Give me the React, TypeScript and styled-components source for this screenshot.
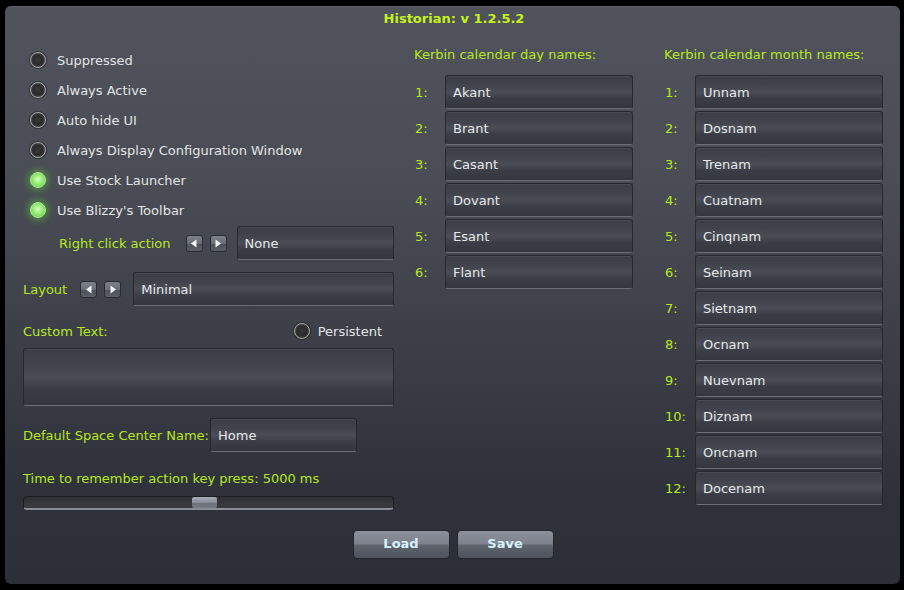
import React from "react";
import styled, { createGlobalStyle, css } from "styled-components";

const Global = createGlobalStyle`
  html, body { margin: 0; padding: 0; background: #000; }
  body { font-family: "DejaVu Sans", "Liberation Sans", sans-serif; font-size: 13px; }
`;

const Screen = styled.div`
  width: 904px;
  height: 590px;
  padding: 6px 4px 0 5px;
  box-sizing: border-box;
  background: #000;
`;

const Window = styled.div`
  width: 895px;
  height: 578px;
  box-sizing: border-box;
  border-radius: 6px;
  background: linear-gradient(180deg, #50535b 0%, #4a4d55 30%, #3b3e46 60%, #2e3139 85%, #2c2f37 100%);
  box-shadow: inset 0 1px 0 rgba(255,255,255,0.08);
  padding: 5px 17px 0 18px;
  display: flex;
  flex-direction: column;
`;

const Title = styled.div`
  text-align: center;
  color: #c4f21c;
  font-weight: bold;
  font-size: 13px;
  line-height: 16px;
  height: 16px;
  padding-left: 2px;
`;

const Columns = styled.div`
  display: grid;
  grid-template-columns: 371px 219px 230px;
  column-gap: 20px;
  margin-top: 23px;
`;

const Left = styled.div`
  display: flex;
  flex-direction: column;
  padding-top: 3px;
  margin-top: -8px;
`;

const ToggleRow = styled.div`
  display: flex;
  align-items: center;
  height: 30px;
  padding-left: 7px;
  color: #e2e4e6;
`;

const Dot = styled.span<{ $on?: boolean }>`
  width: 16px;
  height: 16px;
  border-radius: 50%;
  flex: none;
  margin-right: 11px;
  box-sizing: border-box;
  ${(p) =>
    p.$on
      ? css`
          background: radial-gradient(circle at 50% 45%, #d8ffc8 0%, #9cf07a 40%, #5cc43a 100%);
          border: 1px solid #b8f0a0;
          box-shadow: 0 0 6px 3px rgba(90, 200, 60, 0.45);
        `
      : css`
          background: radial-gradient(circle at 50% 50%, #3a3a3a 0%, #2a2a2a 45%, #5a5a5a 100%);
          border: 1.5px solid #a8a8a8;
          box-shadow: 0 0 1px 1px rgba(0,0,0,0.4);
        `}
`;

const Label = styled.span<{ $ml?: number }>`
  color: #b5e81c;
  white-space: nowrap;
  margin-left: ${(p) => p.$ml ?? 0}px;
`;

const Plain = styled.span`
  color: #e2e4e6;
  margin-right: 12px;
  margin-left: -3px;
`;

const Row = styled.div<{ $h?: number; $mt?: number }>`
  display: flex;
  align-items: center;
  flex: none;
  height: ${(p) => p.$h ?? 34}px;
  margin-top: ${(p) => p.$mt ?? 0}px;
`;

const Field = styled.div<{ $w?: number; $ml?: number }>`
  box-sizing: border-box;
  width: ${(p) => (p.$w ? `${p.$w}px` : "auto")};
  flex: ${(p) => (p.$w ? "none" : "1")};
  height: 34px;
  margin-left: ${(p) => p.$ml ?? 0}px;
  border-radius: 3px;
  border: 1px solid #26282d;
  border-bottom-color: #6a6e76;
  background: linear-gradient(180deg, #3a3d45 0%, #41444c 30%, #4a4d55 50%, #3b3e46 70%, #33363d 100%);
  box-shadow: inset 0 1px 0 rgba(255,255,255,0.07);
  color: #e6e8ea;
  display: flex;
  align-items: center;
  padding-left: 7px;
  white-space: nowrap;
`;

const TextArea = styled(Field)`
  flex: none;
  height: 58px;
  margin-top: 6px;
`;

const Arrows = styled.div<{ $ml: number; $mr: number }>`
  display: flex;
  gap: 7px;
  margin-left: ${(p) => p.$ml}px;
  margin-right: ${(p) => p.$mr}px;
`;

const ArrowBtn = styled.div`
  width: 17px;
  height: 17px;
  border-radius: 3px;
  box-sizing: border-box;
  border: 1px solid #2a2c31;
  background: linear-gradient(180deg, #7c808a 0%, #6a6e78 50%, #4c5059 52%, #5a5e67 100%);
  display: flex;
  align-items: center;
  justify-content: center;
`;

const Slider = styled.div`
  position: relative;
  flex: none;
  height: 14px;
  margin-top: 8px;
  box-sizing: border-box;
  border-radius: 4px;
  border: 1px solid #1c1e22;
  border-bottom: 2px solid #8a8e96;
  background: linear-gradient(180deg, #2e3036 0%, #3a3c42 100%);
`;

const Thumb = styled.div`
  position: absolute;
  left: 168px;
  top: 0;
  width: 25px;
  height: 11px;
  border-radius: 2px;
  background: linear-gradient(180deg, #a8acb6 0%, #8a8e98 50%, #6a6e78 52%, #767a84 100%);
`;

const NameColumn = styled.div<{ $pl?: number }>`
  padding-left: ${(p) => p.$pl ?? 0}px;
`;

const Header = styled.div`
  color: #b5e81c;
  height: 20px;
  line-height: 20px;
  margin-top: -5px;
  margin-bottom: 10px;
  white-space: nowrap;
`;

const NameList = styled.div`
  display: flex;
  flex-direction: column;
  gap: 2px;
`;

const NameRow = styled.div`
  display: flex;
  align-items: center;
  height: 34px;
`;

const Num = styled.span`
  width: 30px;
  padding-left: 1px;
  flex: none;
  color: #b5e81c;
`;

const Buttons = styled.div`
  display: flex;
  justify-content: center;
  gap: 7px;
  margin-top: 20px;
`;

const Button = styled.div`
  width: 97px;
  height: 29px;
  box-sizing: border-box;
  border-radius: 4px;
  border: 1px solid #25272c;
  background: linear-gradient(180deg, #8c909a 0%, #7e828c 48%, #60646e 52%, #4e525b 100%);
  color: #d6f2ff;
  font-weight: bold;
  font-size: 13px;
  display: flex;
  align-items: center;
  justify-content: center;
  padding-bottom: 3px;
`;

const Spacer = styled.div`
  flex: 1;
`;

const Tri = ({ dir }: { dir: "l" | "r" }) => (
  <svg width="8" height="9" viewBox="0 0 8 9">
    {dir === "l" ? (
      <polygon points="6.5,0.5 6.5,8.5 1,4.5" fill="#f4f4f4" />
    ) : (
      <polygon points="1.5,0.5 1.5,8.5 7,4.5" fill="#f4f4f4" />
    )}
  </svg>
);

const ArrowPair = ({ ml, mr }: { ml: number; mr: number }) => (
  <Arrows $ml={ml} $mr={mr}>
    <ArrowBtn>
      <Tri dir="l" />
    </ArrowBtn>
    <ArrowBtn>
      <Tri dir="r" />
    </ArrowBtn>
  </Arrows>
);

const toggles: [string, boolean][] = [
  ["Suppressed", false],
  ["Always Active", false],
  ["Auto hide UI", false],
  ["Always Display Configuration Window", false],
  ["Use Stock Launcher", true],
  ["Use Blizzy's Toolbar", true],
];

const days = ["Akant", "Brant", "Casant", "Dovant", "Esant", "Flant"];
const months = [
  "Unnam", "Dosnam", "Trenam", "Cuatnam", "Cinqnam", "Seinam",
  "Sietnam", "Ocnam", "Nuevnam", "Diznam", "Oncnam", "Docenam",
];

export default function App() {
  return (
    <>
      <Global />
      <Screen>
        <Window>
          <Title>Historian: v 1.2.5.2</Title>
          <Columns>
            <Left>
              {toggles.map(([t, on]) => (
                <ToggleRow key={t}>
                  <Dot $on={on} />
                  {t}
                </ToggleRow>
              ))}
              <Row $mt={1}>
                <Label $ml={36}>Right click action</Label>
                <ArrowPair ml={15} mr={10} />
                <Field>None</Field>
              </Row>
              <Row $mt={12}>
                <Label>Layout</Label>
                <ArrowPair ml={13} mr={12} />
                <Field>Minimal</Field>
              </Row>
              <Row $h={22} $mt={14}>
                <Label>Custom Text:</Label>
                <Spacer />
                <Dot />
                <Plain>Persistent</Plain>
              </Row>
              <TextArea />
              <Row $mt={12}>
                <Label>Default Space Center Name:</Label>
                <Field $w={147} $ml={1}>Home</Field>
              </Row>
              <Row $h={20} $mt={16}>
                <Label>Time to remember action key press: 5000 ms</Label>
              </Row>
              <Slider>
                <Thumb />
              </Slider>
            </Left>
            <NameColumn>
              <Header>Kerbin calendar day names:</Header>
              <NameList>
                {days.map((d, i) => (
                  <NameRow key={d}>
                    <Num>{i + 1}:</Num>
                    <Field>{d}</Field>
                  </NameRow>
                ))}
              </NameList>
            </NameColumn>
            <NameColumn $pl={11}>
              <Header>Kerbin calendar month names:</Header>
              <NameList>
                {months.map((d, i) => (
                  <NameRow key={d}>
                    <Num>{i + 1}:</Num>
                    <Field>{d}</Field>
                  </NameRow>
                ))}
              </NameList>
            </NameColumn>
          </Columns>
          <Buttons>
            <Button>Load</Button>
            <Button>Save</Button>
          </Buttons>
        </Window>
      </Screen>
    </>
  );
}
